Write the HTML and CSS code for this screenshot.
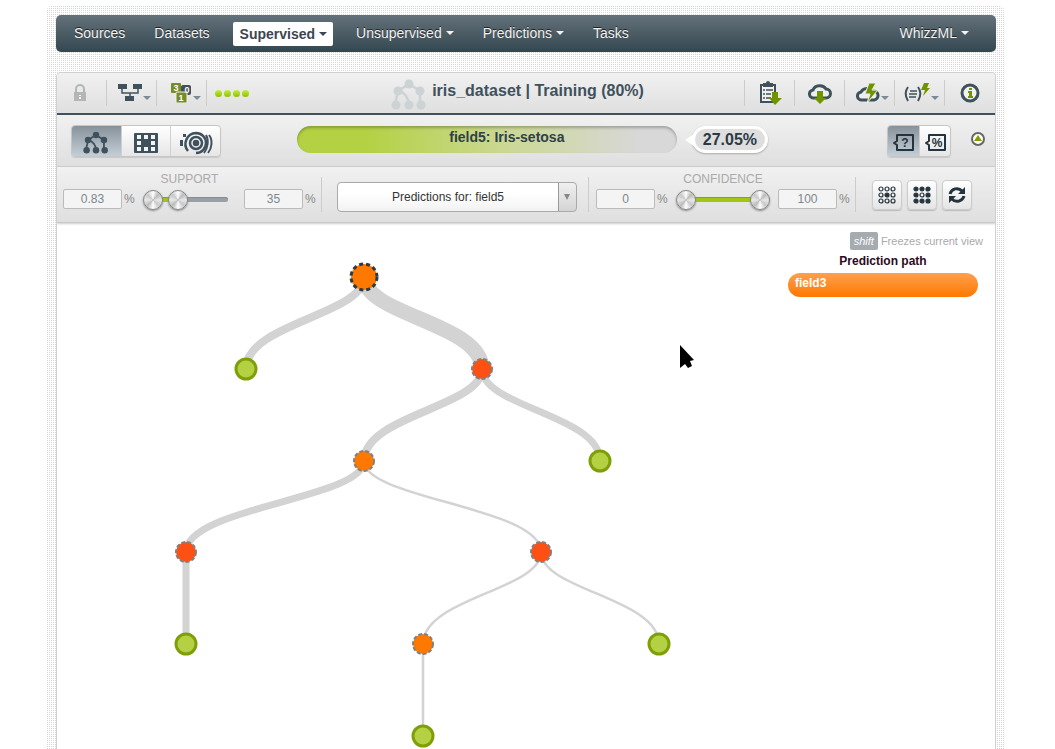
FILE: index.html
```html
<!DOCTYPE html>
<html lang="en">
  <head>
    <meta charset="UTF-8" />
    <meta name="viewport" content="width=device-width, initial-scale=1.0" />
    <title>iris_dataset | Training (80%)</title>
    <link rel="stylesheet" href="styles.css">
  </head>
  <body>
    <svg class="defs" width="0" height="0" aria-hidden="true">
      <symbol id="model" viewBox="0 0 36 32">
        <path d="M18 5 L7 12 M18 5 L29 12 M7 12 L4 26 M7 12 C14 13 18 20 18 26 M29 12 V26" fill="none" stroke="currentColor" stroke-width="2.5" />
        <g fill="currentColor">
          <circle cx="18" cy="5" r="4.5" /><circle cx="7" cy="12" r="4.5" /><circle cx="29" cy="12" r="4.5" />
          <circle cx="5" cy="26" r="4.5" /><circle cx="18" cy="26" r="4.5" /><circle cx="30" cy="26" r="4.5" />
        </g>
      </symbol>
    </svg>

    <div class="page">
      <nav class="navbar">
        <a href="#">Sources</a>
        <a href="#">Datasets</a>
        <a href="#" class="active">Supervised <i class="caret"></i></a>
        <a href="#">Unsupervised <i class="caret"></i></a>
        <a href="#">Predictions <i class="caret"></i></a>
        <a href="#">Tasks</a>
        <a href="#" class="account">WhizzML <i class="caret"></i></a>
      </nav>

      <main class="panel">
        <header class="toolbar">
          <button class="tool private" aria-label="Private">
            <svg width="14" height="18" viewBox="0 0 14 18">
              <path d="M3 8 V5 a4 4 0 0 1 8 0 V8" fill="none" stroke="#b3b6b8" stroke-width="2" />
              <path d="M1 8 h12 v9 h-12 z" fill="#b3b6b8" />
              <path d="M6 11 h2 v1 h-2 z M6 13 h2 v2 h-2 z" fill="#f5f5f5" />
            </svg>
          </button>
          <button class="tool menu" aria-label="Workflow">
            <svg width="24" height="18" viewBox="0 0 24 18">
              <path d="M4 5 V9 H20 V5 M12 9 V13" fill="none" stroke="#3f515c" stroke-width="1.5" />
              <path d="M0 0 h9 v5 h-9 z M15 0 h9 v5 h-9 z M7 12 h9 v5 h-9 z" fill="#3f515c" />
            </svg>
            <i class="caret"></i>
          </button>
          <button class="tool menu" aria-label="Objects">
            <svg class="counts" width="21" height="20" viewBox="0 0 21 20">
              <rect x="10" y="2" width="10" height="10" rx="2" fill="#3f515c" />
              <rect x="0" y="0" width="10" height="10" rx="1" fill="#778c24" />
              <rect x="5" y="9" width="11" height="11" rx="1" fill="#778c24" stroke="#eee" />
              <text x="5" y="8">3</text>
              <text x="16" y="10">0</text>
              <text x="10" y="18">1</text>
            </svg>
            <i class="caret"></i>
          </button>
          <span class="dots"><i></i><i></i><i></i><i></i></span>

          <h1 class="title">
            <svg width="36" height="32"><use href="#model" /></svg>
            iris_dataset | Training (80%)
          </h1>

          <div class="actions">
            <button class="tool" aria-label="Summary report">
              <svg width="24" height="24" viewBox="0 0 24 24">
                <path d="M3 4 H17 V21 H3 Z" fill="#f1f1f1" stroke="#3f515c" stroke-width="2" />
                <path d="M5 2 h3 a2 2 0 0 1 4 0 h3 v4 h-10 z" fill="#3f515c" />
                <path d="M5 9 h2 M5 13 h2 M5 17 h2 M8 9 h7 M8 13 h5 M8 17 h5" stroke="#3f515c" stroke-width="1.5" />
                <path d="M14 11 h6 v6 h4 l-7 7 l-6 -7 h3 z" fill="#6f9400" />
              </svg>
            </button>
            <button class="tool" aria-label="Download">
              <svg width="24" height="24" viewBox="0 0 24 24">
                <path d="M6 17 a4 4 0 0 1 -1 -8 a7 6 0 0 1 13 -1 a4.5 4.5 0 0 1 0 9 z" fill="#eee" stroke="#3f515c" stroke-width="3" />
                <path d="M9 10 h6 v7 h3 l-6 6 l-6 -6 h3 z" fill="#6f9400" />
              </svg>
            </button>
            <button class="tool menu" aria-label="One-click actions">
              <svg width="24" height="22" viewBox="0 0 24 22">
                <path d="M6 18 a4 4 0 0 1 -1 -8 a7 6 0 0 1 12 -1 a4.5 4.5 0 0 1 1 9 z" fill="#eee" stroke="#3f515c" stroke-width="3" />
                <path d="M13 1 h7 l-4 7 h6 l-11 13 l3 -9 h-5 z" fill="#6f9400" stroke="#eee" />
              </svg>
              <i class="caret"></i>
            </button>
            <button class="tool menu" aria-label="Scripts">
              <svg width="26" height="20" viewBox="2 0 26 20">
                <path d="M6 4 C3 8 3 13 6 18 M16 4 C19 8 19 13 16 18" fill="none" stroke="#3f515c" stroke-width="2" />
                <path d="M8 8 h7 M7 11 h8 M7 14 h7" stroke="#3f515c" stroke-width="1.5" />
                <path d="M22 0 h5 l-2 5 h3 l-7 8 l2 -6 h-4 z" fill="#6f9400" />
              </svg>
              <i class="caret"></i>
            </button>
            <button class="tool" aria-label="Info">
              <svg width="20" height="20" viewBox="0 0 20 20">
                <circle cx="10" cy="10" r="8" fill="#f1f1f1" stroke="#3f515c" stroke-width="3" />
                <path d="M9 5 h3 v2 h-3 z M8 8 h4 v5 h1 v2 h-5 v-2 h1 v-3 h-1 z" fill="#6f9400" />
              </svg>
            </button>
          </div>
        </header>

        <section class="summary">
          <div class="button-group views">
            <button class="selected" aria-label="Tree view">
              <svg width="26" height="24" viewBox="0 0 36 32"><use href="#model" /></svg>
            </button>
            <button aria-label="Sunburst view">
              <svg width="24" height="20" viewBox="0 0 24 20">
                <rect width="24" height="20" rx="1" fill="#3f515c" />
                <path d="M3 2 h4 v4 h-4 z M10 2 h4 v4 h-4 z M17 2 h4 v4 h-4 z M3 8 h4 v4 h-4 z M17 8 h4 v4 h-4 z M3 14 h4 v4 h-4 z M10 14 h4 v4 h-4 z M17 14 h4 v4 h-4 z" fill="#f4f4f4" />
              </svg>
            </button>
            <button aria-label="Radial view">
              <svg width="34" height="24" viewBox="0 0 34 24" fill="none" stroke="#3f515c" stroke-width="2.5">
                <circle cx="17" cy="12" r="2" fill="#3f515c" />
                <circle cx="17" cy="12" r="6" />
                <path d="M9 20 A11 11 0 0 1 17 2 A10 10 0 0 1 17 22" />
                <path d="M27 4 C30 9 29 17 25 22 M30 4 C34 9 33 17 29 22" stroke-width="2" />
                <path d="M1 9 h3 v6 h-3 z M4 3 h3 v3 h-3 z" fill="#3f515c" stroke="none" />
              </svg>
            </button>
          </div>

          <div class="prediction">field5: Iris-setosa</div>
          <div class="bubble">27.05%</div>

          <div class="button-group labels">
            <button class="selected" aria-label="Show questions">
              <svg width="24" height="18" viewBox="0 0 24 18">
                <path d="M6 1 h16 v15 h-16 v-5 l-3 -2 l3 -2 z" />
                <text x="14" y="13">?</text>
              </svg>
            </button>
            <button aria-label="Show percentages">
              <svg width="24" height="18" viewBox="0 0 24 18">
                <path d="M6 1 h16 v15 h-16 v-5 l-3 -2 l3 -2 z" />
                <text x="14" y="13">%</text>
              </svg>
            </button>
          </div>
          <button class="collapse" aria-label="Collapse filters">
            <svg width="16" height="16" viewBox="0 0 16 16">
              <circle cx="8" cy="8" r="6" fill="#fff" stroke="#666" stroke-width="2" />
              <path d="M4 10 L8 4 L12 10 Z" fill="#7fa000" />
            </svg>
          </button>
        </section>

        <section class="filters">
          <fieldset class="filter">
            <legend>SUPPORT</legend>
            <input type="text" class="number" value="0.83" aria-label="Minimum support" />
            <span>%</span>
            <div class="slider support">
              <i class="track"></i>
              <input type="range" value="0" aria-label="Support from" />
              <input type="range" value="38" aria-label="Support to" />
            </div>
            <input type="text" class="number" value="35" aria-label="Maximum support" />
            <span>%</span>
          </fieldset>
          <i class="divider"></i>
          <select class="objective" aria-label="Predictions for">
            <option>Predictions for: field5</option>
          </select>
          <i class="divider"></i>
          <fieldset class="filter">
            <legend>CONFIDENCE</legend>
            <input type="text" class="number" value="0" aria-label="Minimum confidence" />
            <span>%</span>
            <div class="slider confidence">
              <i class="track"></i>
              <input type="range" value="0" aria-label="Confidence from" />
              <input type="range" value="100" aria-label="Confidence to" />
            </div>
            <input type="text" class="number" value="100" aria-label="Maximum confidence" />
            <span>%</span>
          </fieldset>
          <i class="divider"></i>
          <div class="filter-buttons">
            <button aria-label="Frequent patterns">
              <svg width="20" height="18" viewBox="0 0 20 18" fill="none" stroke="#23343e" stroke-width="1.2">
                <circle cx="4" cy="3" r="2" /><circle cx="10" cy="3" r="2" /><circle cx="16" cy="3" r="2" />
                <circle cx="4" cy="9" r="2" /><circle cx="10" cy="9" r="2" fill="#23343e" /><circle cx="16" cy="9" r="2" />
                <circle cx="4" cy="15" r="2" /><circle cx="10" cy="15" r="2" /><circle cx="16" cy="15" r="2" />
              </svg>
            </button>
            <button aria-label="Rare patterns">
              <svg width="20" height="18" viewBox="0 0 20 18" fill="#23343e" stroke="#23343e" stroke-width="1.2">
                <circle cx="4" cy="3" r="2" /><circle cx="10" cy="3" r="2" /><circle cx="16" cy="3" r="2" />
                <circle cx="4" cy="9" r="2" /><circle cx="10" cy="9" r="2" fill="none" /><circle cx="16" cy="9" r="2" />
                <circle cx="4" cy="15" r="2" /><circle cx="10" cy="15" r="2" /><circle cx="16" cy="15" r="2" />
              </svg>
            </button>
            <button aria-label="Reset filters">
              <svg width="18" height="18" viewBox="0 0 18 18">
                <path d="M2 8 A7 7 0 0 1 14 5 M16 10 A7 7 0 0 1 4 13" fill="none" stroke="#23343e" stroke-width="3" />
                <path d="M17 1 V8 H10 Z M1 17 V10 H8 Z" fill="#23343e" />
              </svg>
            </button>
          </div>
        </section>

        <section class="canvas">
          <svg class="tree" width="720" height="526" viewBox="0 0 720 526">
            <g class="links">
              <path stroke-width="8" d="M307 54 C307 92 189 100 189 146" />
              <path stroke-width="15" d="M307 54 C307 92 425 100 425 146" />
              <path stroke-width="8" d="M425 146 C425 184 307 192 307 238" />
              <path stroke-width="7" d="M425 146 C425 184 543 192 543 238" />
              <path stroke-width="7" d="M307 238 C307 276 129 284 129 329" />
              <path stroke-width="2.5" d="M307 238 C307 276 484 284 484 329" />
              <path stroke-width="7" d="M129 329 V421" />
              <path stroke-width="2.5" d="M484 329 C484 367 366 375 366 421" />
              <path stroke-width="2.5" d="M484 329 C484 367 602 375 602 421" />
              <path stroke-width="2.5" d="M366 421 V513" />
            </g>
            <circle class="node root" cx="307" cy="54" r="13" />
            <circle class="node petal-width" cx="425" cy="146" r="10" />
            <circle class="node petal-length" cx="307" cy="238" r="10" />
            <circle class="node petal-width" cx="129" cy="329" r="10" />
            <circle class="node petal-width" cx="484" cy="329" r="10" />
            <circle class="node petal-length" cx="366" cy="421" r="10" />
            <circle class="node leaf" cx="189" cy="146" r="10" />
            <circle class="node leaf" cx="543" cy="238" r="10" />
            <circle class="node leaf" cx="129" cy="421" r="10" />
            <circle class="node leaf" cx="602" cy="421" r="10" />
            <circle class="node leaf" cx="366" cy="513" r="10" />
            <path d="M623 122 V145 L628 141 L631 145 L635 143 L633 138 L637 137 Z" />
          </svg>
          <aside class="path">
            <p class="hint"><kbd>shift</kbd> Freezes current view</p>
            <h2>Prediction path</h2>
            <div class="step">field3</div>
          </aside>
        </section>
      </main>
    </div>
  </body>
</html>
```

FILE: styles.css
```css
* {
  box-sizing: border-box;
}
body {
  margin: 0;
  background: #fff;
  color: #3f515c;
  font-family: 'Liberation Sans', Arial, sans-serif;
  font-size: 12px;
}
button {
  padding: 0;
  border: none;
  background: none;
  color: inherit;
  font: inherit;
  cursor: pointer;
}
svg {
  display: block;
  flex: none;
}
.defs {
  position: absolute;
}
.page {
  display: flex;
  flex-direction: column;
  margin: 5px 50px 0 46px;
  padding: 10px 9px 0 10px;
  min-height: calc(100vh - 5px);
  border-radius: 8px 8px 0 0;
  background-color: #d6d6d6;
  background-image:
    linear-gradient(#fff 50%, transparent 50%),
    linear-gradient(90deg, #fff 50%, transparent 50%);
  background-size: 2px 2px;
}
.caret {
  display: inline-block;
  border: 4px solid transparent;
  border-top-color: currentColor;
  border-bottom: none;
}

/* Main navigation */
.navbar {
  display: flex;
  align-items: center;
  height: 37px;
  padding: 0 18px 0 9px;
  border-radius: 5px;
  background: linear-gradient(#63717a, #344750);
}
.navbar a {
  display: flex;
  align-items: center;
  gap: 4px;
  height: 24px;
  margin-right: 11px;
  padding: 0 9px 2px;
  color: #f2f2f2;
  font-size: 14px;
  text-decoration: none;
  text-shadow: 0 -1px 0 #222;
}
.navbar .active {
  margin: 0 14px 0 3px;
  padding: 0 6px 0 7px;
  border-radius: 2px;
  background: #fff;
  color: #3c4650;
  font-weight: bold;
  text-shadow: none;
}
.navbar .account {
  margin: 0 0 0 auto;
}

/* Panel */
.panel {
  flex: 1;
  margin-top: 20px;
  border: 1px solid #d0d0d0;
  border-bottom: none;
  border-radius: 5px 5px 0 0;
  background: #fff;
}
.toolbar,
.summary,
.filters {
  display: flex;
  align-items: center;
  background: linear-gradient(#f1f1f1, #dfdfdf);
}
.toolbar {
  height: 42px;
  border-bottom: 2px solid #3f515c;
  border-radius: 4px 4px 0 0;
}
.tool {
  display: flex;
  align-items: center;
  justify-content: center;
  gap: 1px;
  width: 50px;
  height: 26px;
  border-right: 1px solid #ccc;
}
.tool.private {
  padding-right: 4px;
}
.tool.menu {
  justify-content: flex-end;
  padding-right: 5px;
}
.tool .caret {
  align-self: flex-end;
  margin-bottom: 6px;
  color: #7b8a94;
}
.counts text {
  fill: #fff;
  font-size: 9px;
  font-weight: bold;
  text-anchor: middle;
}
.dots {
  display: flex;
  gap: 2px;
  padding-left: 8px;
}
.dots i {
  width: 7px;
  height: 7px;
  border-radius: 50%;
  background: linear-gradient(#c4ee3a, #8cc000);
}
.title {
  display: flex;
  flex: 1;
  align-items: center;
  justify-content: center;
  gap: 5px;
  margin: 0 0 4px;
  padding-left: 42px;
  font-size: 16px;
  line-height: 20px;
}
.title svg {
  margin-top: 8px;
  color: #cdd2d4;
}
.actions {
  display: flex;
  border-left: 1px solid #ccc;
}
.actions .tool:last-child {
  border-right: none;
}

/* Prediction summary */
.summary {
  height: 52px;
  padding: 0 9px 0 14px;
  border-bottom: 1px solid #ccc;
}
.button-group {
  display: flex;
  height: 32px;
  border: 1px solid #c6c6c6;
  border-radius: 4px;
  background: linear-gradient(#fff, #e6e6e6);
  box-shadow: 0 1px 1px #c8c8c8;
}
.button-group button {
  display: flex;
  flex: 1;
  align-items: center;
  justify-content: center;
  padding-top: 4px;
}
.button-group button + button {
  border-left: 1px solid #d0d0d0;
}
.button-group .selected {
  border-radius: 3px 0 0 3px;
  background: linear-gradient(#87929a, #c3ced6);
}
.views {
  width: 150px;
}
.labels {
  width: 64px;
  margin-left: auto;
}
.labels path {
  fill: none;
  stroke: #23343e;
  stroke-width: 2;
  stroke-linejoin: round;
}
.labels text {
  fill: #23343e;
  font-size: 12px;
  font-weight: bold;
  text-anchor: middle;
}
.prediction {
  flex: 1;
  height: 27px;
  margin-left: 76px;
  margin-bottom: 3px;
  padding-left: 40px;
  border-radius: 14px;
  background: linear-gradient(90deg, #b4d143 18%, #cbd894 55%, #d8d8d8 90%);
  box-shadow: inset 0 2px 3px rgba(0, 0, 0, 0.25);
  color: #2f4048;
  font-size: 14px;
  font-weight: bold;
  line-height: 23px;
  text-align: center;
}
.bubble {
  position: relative;
  margin: 0 119px 2px 15px;
  padding: 0 8px;
  border: 3px solid #fff;
  border-radius: 14px;
  background: #dedede;
  box-shadow: 0 1px 2px #aaa;
  color: #2b3a45;
  font-size: 16px;
  font-weight: bold;
  line-height: 21px;
}
.bubble::before {
  content: '';
  position: absolute;
  top: 5px;
  left: -10px;
  border: 6px solid transparent;
  border-right: 9px solid #fff;
  border-left: none;
}
.collapse {
  margin-left: 19px;
  margin-bottom: 4px;
}

/* Filters */
.filters {
  height: 56px;
  padding: 0 23px 0 6px;
  border-bottom: 1px solid #c8c8c8;
  box-shadow: 0 1px 2px #ccc;
}
.filter {
  display: flex;
  align-items: center;
  margin: 0 0 6px;
  padding: 0;
  border: none;
  color: #888;
}
.filter legend {
  height: 14px;
  margin: 0 auto;
  padding: 0;
  color: #aaa;
  line-height: 14px;
}
.filter span {
  width: 13px;
  padding-left: 2px;
}
.number {
  width: 59px;
  height: 20px;
  margin: 3px 0;
  padding: 0;
  border: 1px solid #bbb;
  border-radius: 2px;
  background: #f4f4f4;
  color: #7d8790;
  font: inherit;
  text-align: center;
}
.slider {
  position: relative;
  height: 20px;
  margin: 3px 8px 0;
}
.support {
  width: 85px;
  margin-right: 16px;
}
.confidence {
  width: 94px;
}
.track {
  position: absolute;
  top: 7px;
  right: 0;
  left: 2px;
  height: 5px;
  border-radius: 3px;
  background: linear-gradient(90deg, #a3c514 40%, #98a0a5 40%);
  box-shadow: inset 0 1px 0 #858d92;
}
.confidence .track {
  background: #a3c514;
}
.slider input {
  position: absolute;
  top: 0;
  left: 0;
  width: 100%;
  height: 20px;
  margin: 0;
  background: none;
  appearance: none;
  pointer-events: none;
}
.slider input::-webkit-slider-thumb {
  width: 20px;
  height: 20px;
  border: 1px solid #888;
  border-radius: 50%;
  background: conic-gradient(#fff, #bbb 12%, #e8e8e8 25%, #c8c8c8 37%, #fff 50%, #bbb 62%, #e8e8e8 75%, #c8c8c8 87%, #fff);
  box-shadow: 0 1px 2px #888;
  appearance: none;
  pointer-events: auto;
}
.divider {
  align-self: flex-start;
  width: 1px;
  height: 35px;
  margin: 10px 7px 0 5px;
  background: #ccc;
}
.objective {
  flex: 1;
  height: 30px;
  margin: 4px 6px 0 8px;
  padding: 0 18px 0 0;
  border: 1px solid #aaa;
  border-radius: 4px;
  background:
    url("data:image/svg+xml,%3Csvg xmlns='http://www.w3.org/2000/svg' width='18' height='28'%3E%3Cpath d='M0 0V28' stroke='%23999' stroke-width='2'/%3E%3Cpath d='M6 11H12L9 17Z' fill='%23888'/%3E%3C/svg%3E") right / 18px 28px no-repeat,
    linear-gradient(#f0f0f0, #d4d4d4) right / 18px 100% no-repeat,
    linear-gradient(#fff 40%, #f2f2f2);
  color: #333;
  font: inherit;
  text-align-last: center;
  appearance: none;
}
.filter-buttons {
  display: flex;
  gap: 5px;
  margin-left: 9px;
}
.filter-buttons button {
  display: flex;
  align-items: center;
  justify-content: center;
  width: 30px;
  height: 30px;
  border: 1px solid #ccc;
  border-radius: 4px;
  background: linear-gradient(#fff, #e4e4e4);
  box-shadow: 0 1px 1px #bbb;
}

/* Tree */
.canvas {
  display: flex;
  justify-content: space-between;
}
.tree {
  flex: none;
}
.links {
  fill: none;
  stroke: #d3d3d3;
}
.node {
  stroke: #808080;
  stroke-width: 2;
  stroke-dasharray: 4 2;
}
.root {
  fill: #ff7800;
  stroke: #2b3a45;
  stroke-width: 3;
  stroke-dasharray: 4 3;
}
.petal-width {
  fill: #ff5014;
}
.petal-length {
  fill: #ff7800;
}
.leaf {
  fill: #b4d143;
  stroke: #7f9f08;
  stroke-width: 3;
  stroke-dasharray: none;
}
.path {
  width: 195px;
  margin-right: 12px;
  padding-top: 9px;
}
.hint {
  margin: 0;
  color: #aaa;
  font-size: 11px;
  line-height: 18px;
  text-align: right;
}
.hint kbd {
  display: inline-block;
  padding: 0 4px;
  border-radius: 2px;
  background: #a5abaf;
  color: #fff;
  font-family: inherit;
  font-style: italic;
}
.path h2 {
  margin: 4px 5px 5px 0;
  color: #2b0a1e;
  font-size: 12px;
  line-height: 14px;
  text-align: center;
}
.step {
  height: 24px;
  margin-right: 5px;
  padding-left: 7px;
  border-radius: 12px;
  background: linear-gradient(#ffa04f, #ff7800);
  color: #fff;
  font-weight: bold;
  line-height: 20px;
}
```
